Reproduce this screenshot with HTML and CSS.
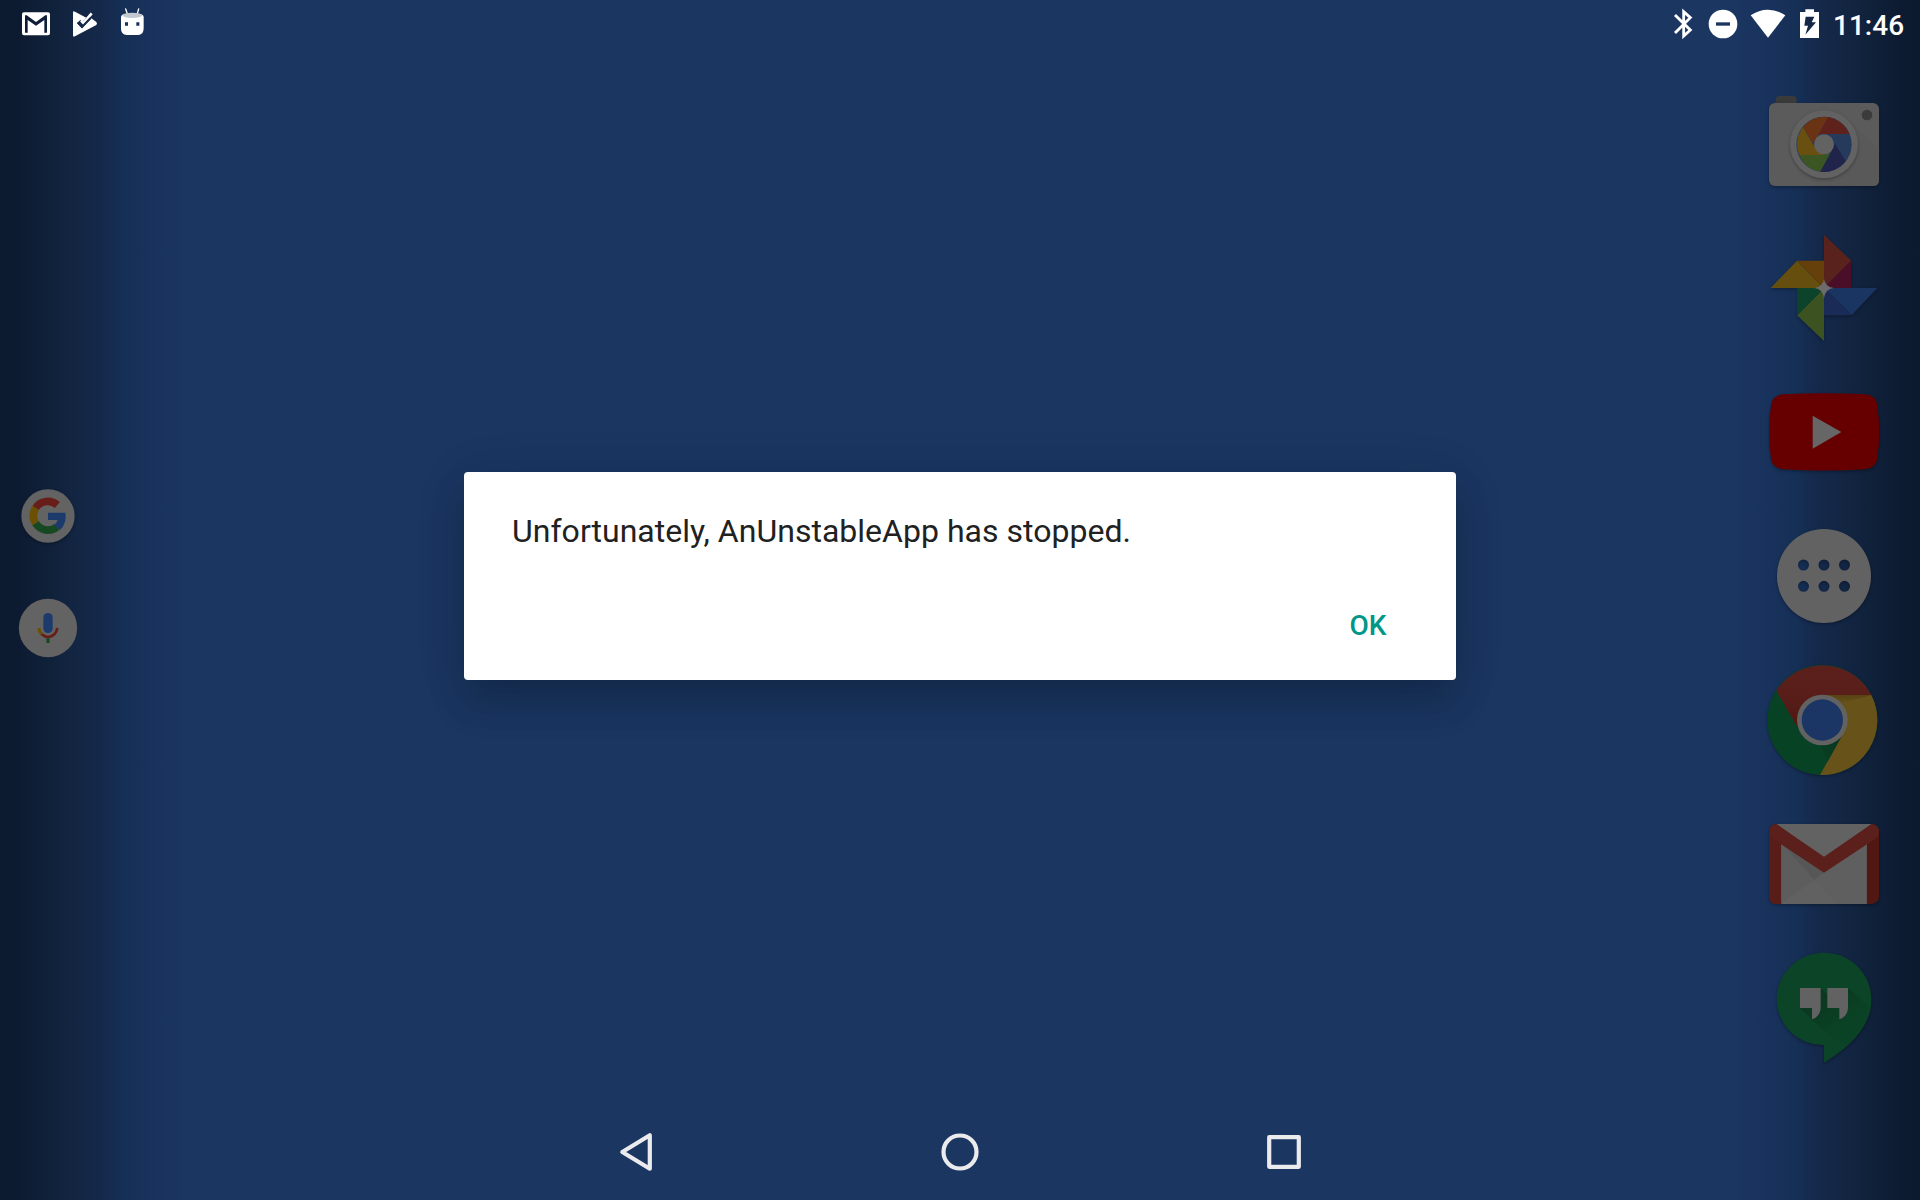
FILE: index.html
```html
<!DOCTYPE html>
<html lang="en">
<head>
<meta charset="utf-8">
<title>Home screen</title>
<link rel="stylesheet" href="styles.css">
</head>
<body>
<div class="screen">
  <header class="status-bar">
    <div class="notifications">
      <svg class="icon" viewBox="60 24 96 96" fill="#fff">
        <path fill-rule="evenodd" d="M72 37H144Q150 37 150 43V100Q150 106 144 106H72Q66 106 66 100V43Q66 37 72 37ZM75 98H83V60L108 77L133 60V98H141V46H136L108 66L80 46H75Z"/>
      </svg>
      <svg class="icon" viewBox="204 24 96 96" fill="#fff">
        <path d="M219 37Q219 31 225 35L259 53L247 66L241 60L231 69L246 84L274 55L289 66Q293 71 289 75L225 109Q219 112 219 105Z"/>
        <path d="M243 62L250 69L275 40" fill="none" stroke="#fff" stroke-width="8"/>
        <path d="M233 68L246 81L272 54" fill="none" stroke="#14284a" stroke-width="6"/>
      </svg>
      <svg class="icon" viewBox="348 24 96 96" fill="#fff">
        <path d="M377 27L383 44M416 27L411 44" stroke="#fff" stroke-width="4" stroke-linecap="round"/>
        <path d="M363 52Q363 42 380 42H414Q431 42 431 52V85Q431 105 414 105H380Q363 105 363 85Z"/>
        <ellipse cx="397" cy="46" rx="30" ry="8" fill="#c3c8d0"/>
        <path d="M375 67H384V77H375ZM409 67H418V77H409Z" fill="#17315a"/>
      </svg>
    </div>
    <div class="system">
      <svg class="icon slim" viewBox="93 24 72 96">
        <path d="M105 45L151 90L131 108V35L151 53L105 99" fill="none" stroke="#fff" stroke-width="8.500"/>
      </svg>
      <svg class="icon" viewBox="201 24 96 96">
        <circle cx="249" cy="72" r="43" fill="#fff"/><path d="M228 67H270V77H228Z" fill="#1a355f"/>
      </svg>
      <svg class="icon wide" viewBox="333 24 108 96">
        <path d="M332 46Q356 29 384 29T436 46L384 113Z" fill="#fff"/>
      </svg>
      <svg class="icon slim" viewBox="477 24 72 96">
        <path d="M480 36H496V28H522V36H537V114H480Z" fill="#fff"/><path d="M497 50H523L515 67H528L496 104L504 77H493Z" fill="#152746"/>
      </svg>
      <time class="clock">11:46</time>
    </div>
  </header>

  <main class="home">
    <aside class="search">
      <svg class="bubble" viewBox="24 18 240 240">
        <circle class="shade" cx="144" cy="138" r="80" fill="#636363"/>
        <g fill="none" stroke-width="23">
          <path d="M172 105A43.500 43.500 0 0 0 107 114" stroke="#671e18"/>
          <path d="M107 114A43.500 43.500 0 0 0 107 160" stroke="#6b5004"/>
          <path d="M107 160A43.500 43.500 0 0 0 171 171" stroke="#164922"/>
        </g>
        <path d="M144 128H196Q201 160 180 180L162 166Q170 160 173 150H144Z" fill="#1c3a6c"/>
      </svg>
      <svg class="bubble" viewBox="24 354 240 240">
        <circle cx="144" cy="474" r="87.500" fill="#636363"/>
        <rect x="130" y="429" width="28" height="60" rx="14" fill="#1c3a6c"/>
        <path d="M117 474Q117 485 125 493" fill="none" stroke="#6b5004" stroke-width="9"/>
        <path d="M125 493Q134 501 144 501Q168 499 172 474" fill="none" stroke="#671e18" stroke-width="8"/>
        <path d="M139 505H149V519H139Z" fill="#164922"/>
      </svg>
    </aside>

    <nav class="dock">
      <svg class="app" viewBox="72 12 360 360">
        <rect x="107" y="48" width="63" height="40" rx="12" fill="#3a3a3a"/>
        <rect class="shade" x="87" y="69" width="330" height="249" rx="18" fill="#5b5b5b"/>
        <path d="M325 120L400 190L417 208V300Q417 318 399 318H232L185 270Z" fill="#595959"/>
        <circle class="shade" cx="252" cy="193" r="102" fill="#626262"/>
        <circle cx="252" cy="193" r="83" fill="#263b5c"/>
        <path d="M264 111A83 83 0 0 1 328 162H252L235 163Z" fill="#5e211b"/>
        <path d="M189 141A83 83 0 0 1 264 111L232 170L218 190Z" fill="#6a3314"/>
        <path d="M178 225A83 83 0 0 1 189 141L221 197L252 225Z" fill="#6a5010"/>
        <path d="M241 275A83 83 0 0 1 178 225H250L272 216Z" fill="#3c5623"/>
        <path d="M317 243A83 83 0 0 1 241 275L270 223L284 190Z" fill="#20244a"/>
        <circle cx="252" cy="193" r="30" fill="#626262"/>
        <circle cx="381" cy="105" r="16" fill="#3b3b3b"/>
      </svg>
      <svg class="app" viewBox="72 444 360 360">
        <g class="shade">
          <path d="M252 464L334 542L252 624Z" fill="#59221c"/><path d="M334 542V624H252Z" fill="#4b0e29"/>
          <path d="M92 624L171 542L252 624Z" fill="#654e0e"/><path d="M171 542H252V624Z" fill="#66400a"/>
          <path d="M252 783L171 706L252 624Z" fill="#3c5321"/><path d="M171 706V624H252Z" fill="#0c432b"/>
          <path d="M412 624L335 706L252 624Z" fill="#1b3562"/><path d="M335 706H252V624Z" fill="#192b56"/>
        </g>
        <path d="M252 596Q255 620 281 624Q255 628 252 654Q249 628 223 624Q249 620 252 596Z" fill="#6c6c6c"/>
      </svg>
      <svg class="app" viewBox="72 6 360 360">
        <path class="shade" d="M130 73Q252 66 375 73Q408 76 412 106Q423 185 412 268Q406 295 375 298Q252 305 130 298Q98 295 93 268Q82 185 93 106Q98 76 130 73Z" fill="#660000"/>
        <path d="M218 137L304 186L218 236Z" fill="#666"/>
      </svg>
      <svg class="app" viewBox="72 438 360 360">
        <path class="shade" fill="#626262" fill-rule="evenodd" d="M111 618a141 141 0 1 0 282 0a141 141 0 1 0-282 0ZM174 585a16.500 16.500 0 1 0 33 0a16.500 16.500 0 1 0-33 0ZM235.500 585a16.500 16.500 0 1 0 33 0a16.500 16.500 0 1 0-33 0ZM297 585a16.500 16.500 0 1 0 33 0a16.500 16.500 0 1 0-33 0ZM174 649a16.500 16.500 0 1 0 33 0a16.500 16.500 0 1 0-33 0ZM235.500 649a16.500 16.500 0 1 0 33 0a16.500 16.500 0 1 0-33 0ZM297 649a16.500 16.500 0 1 0 33 0a16.500 16.500 0 1 0-33 0Z"/>
      </svg>
      <svg class="app" viewBox="72 60 360 360">
        <defs>
          <linearGradient id="fold" x1=".5" y1="0" x2=".3" y2="1"><stop offset="0" stop-color="#5b201b"/><stop offset=".5" stop-color="#591e19"/><stop offset="1" stop-color="#4f1712"/></linearGradient>
          <linearGradient id="gold" x1="0" y1="0" x2="0" y2="1"><stop offset="0" stop-color="#574213"/><stop offset="1" stop-color="#67521a"/></linearGradient>
          <linearGradient id="leaf" x1="1" y1="0" x2="0" y2="1"><stop offset="0" stop-color="#08361e"/><stop offset="1" stop-color="#084024"/></linearGradient>
        </defs>
        <circle class="shade" cx="247" cy="240" r="165" fill="#084225"/>
        <path d="M247 165H394A165 165 0 0 1 240 405L304 290Z" fill="#67521a"/>
        <path d="M109 152A165 165 0 0 1 394 165H247L174 265Z" fill="url(#fold)"/>
        <path d="M260 165H394L308 190Z" fill="url(#gold)"/>
        <path d="M304 290L262 367L240 316Z" fill="url(#leaf)"/>
        <circle cx="247" cy="240" r="76" fill="#626262"/>
        <circle cx="247" cy="240" r="62" fill="#1b3665"/>
      </svg>
      <svg class="app" viewBox="72 492 360 360">
        <rect class="shade" x="87" y="552" width="330" height="240" rx="22" fill="#501713"/>
        <path d="M87 575V770Q87 792 109 792H124V590Z" fill="#581d18"/>
        <path d="M124 600H380V792H124Z" fill="#616161"/>
        <path d="M124 610L290 792H380V612L252 698Z" fill="#5f5f5f"/>
        <path d="M124 610L222 720L252 698Z" fill="#575757"/>
        <path d="M124 610L222 720L124 790Z" fill="#5d5d5d"/>
        <path d="M109 552H395L252 655Z" fill="#626262"/>
        <path d="M109 552L252 650L395 552Q417 554 417 577Q417 588 406 596L252 698L98 596Q87 588 87 577Q88 554 109 552Z" fill="#5b201b"/>
      </svg>
      <svg class="app" viewBox="72 84 360 360">
        <defs>
          <linearGradient id="cast" gradientUnits="userSpaceOnUse" x1="240" y1="230" x2="310" y2="320"><stop offset="0" stop-color="#0b3820"/><stop offset="1" stop-color="#0a4225"/></linearGradient>
        </defs>
        <path class="shade" d="M252 98A141 141 0 0 1 394 240Q394 342 252 428V375A138 138 0 0 1 110 240A141 141 0 0 1 252 98Z" fill="#0b4426"/>
        <path d="M242 204L262 224L324 204L390 262Q374 330 316 375L270 350L180 264Z" fill="url(#cast)"/>
        <path d="M180 204H242V264Q240 290 216 298V264H180ZM262 204H324V264Q322 290 298 298V264H262Z" fill="#626262"/>
      </svg>
    </nav>

    <div class="dialog-layer">
      <section class="dialog" role="alertdialog">
        <p class="message">Unfortunately, AnUnstableApp has stopped.</p>
        <div class="actions"><button class="ok">OK</button></div>
      </section>
    </div>
  </main>

  <footer class="nav-bar">
    <svg class="key" viewBox="-24 -24 48 48"><path d="M-13.700 0L13.800-16.700V16.700Z"/></svg>
    <svg class="key" viewBox="-24 -24 48 48"><circle r="16.500"/></svg>
    <svg class="key" viewBox="-24 -24 48 48"><rect x="-14.800" y="-14.800" width="29.600" height="29.600"/></svg>
  </footer>
</div>
</body>
</html>
```
FILE: styles.css
```css
* { box-sizing: border-box; }

body {
  margin: 0;
  font-family: Roboto, "Liberation Sans", sans-serif;
}

.screen {
  display: grid;
  grid-template-rows: 48px 1fr 96px;
  width: 1920px;
  height: 1200px;
  overflow: hidden;
  background: linear-gradient(90deg,
    #0c1a2e 0, #0d1b32 20px, #10213a 50px, #132644 80px, #15294c 105px, #152f55 122px, #18325c 150px, #1a3661 188px,
    #1a3661 1732px, #18325c 1770px, #152f55 1798px, #15294c 1815px, #132644 1840px, #10213a 1870px, #0d1b32 1900px, #0c1a2e 1920px);
}

svg { display: block; flex: none; overflow: visible; }

.status-bar {
  display: flex;
  justify-content: space-between;
  align-items: center;
  padding: 0 15px 0 20px;
}

.notifications, .system { display: flex; align-items: center; }
.notifications { gap: 16px; }
.system { gap: 12px; }

.icon { width: 32px; height: 32px; }
.icon.slim { width: 24px; }
.icon.wide { width: 36px; }

.clock {
  width: 70px;
  margin-left: -2px;
  margin-right: 2px;
  color: #fff;
  font-size: 28px;
  font-weight: 500;
  line-height: 48px;
  padding-top: 3px;
  white-space: nowrap;
}

.home {
  display: grid;
  grid-template-columns: 96px 1fr 192px;
  position: relative;
}

.search {
  display: flex;
  flex-direction: column;
  justify-content: center;
  align-items: center;
  gap: 32px;
  padding-bottom: 8px;
}

.bubble { width: 80px; height: 80px; }

.dock {
  grid-column: 3;
  display: flex;
  flex-direction: column;
  justify-content: center;
  align-items: center;
  gap: 24px;
}

.app { width: 120px; height: 120px; }
.shade { filter: drop-shadow(0 4px 4px rgba(0, 0, 0, .3)); }

.dialog-layer {
  position: absolute;
  inset: 0;
  display: flex;
  justify-content: center;
  align-items: center;
}

.dialog {
  display: flex;
  flex-direction: column;
  justify-content: space-between;
  width: 992px;
  height: 208px;
  padding: 40px 48px 24px;
  border-radius: 4px;
  background: #fff;
  box-shadow: 0 24px 36px rgba(0, 0, 0, .17), 0 6px 52px rgba(0, 0, 0, .11);
}

.message {
  margin: 0;
  color: #212121;
  font-size: 32px;
  line-height: 38px;
  letter-spacing: .02px;
}

.actions { display: flex; justify-content: flex-end; }

.ok {
  width: 80px;
  height: 60px;
  padding: 0;
  border: 0;
  background: none;
  color: #009688;
  font: 500 28px/60px Roboto, "Liberation Sans", sans-serif;
}

.nav-bar {
  display: flex;
  justify-content: center;
  align-items: center;
  gap: 276px;
}

.key {
  width: 48px;
  height: 48px;
  fill: none;
  stroke: #ebebee;
  stroke-width: 4.200;
  stroke-linejoin: round;
}
```
